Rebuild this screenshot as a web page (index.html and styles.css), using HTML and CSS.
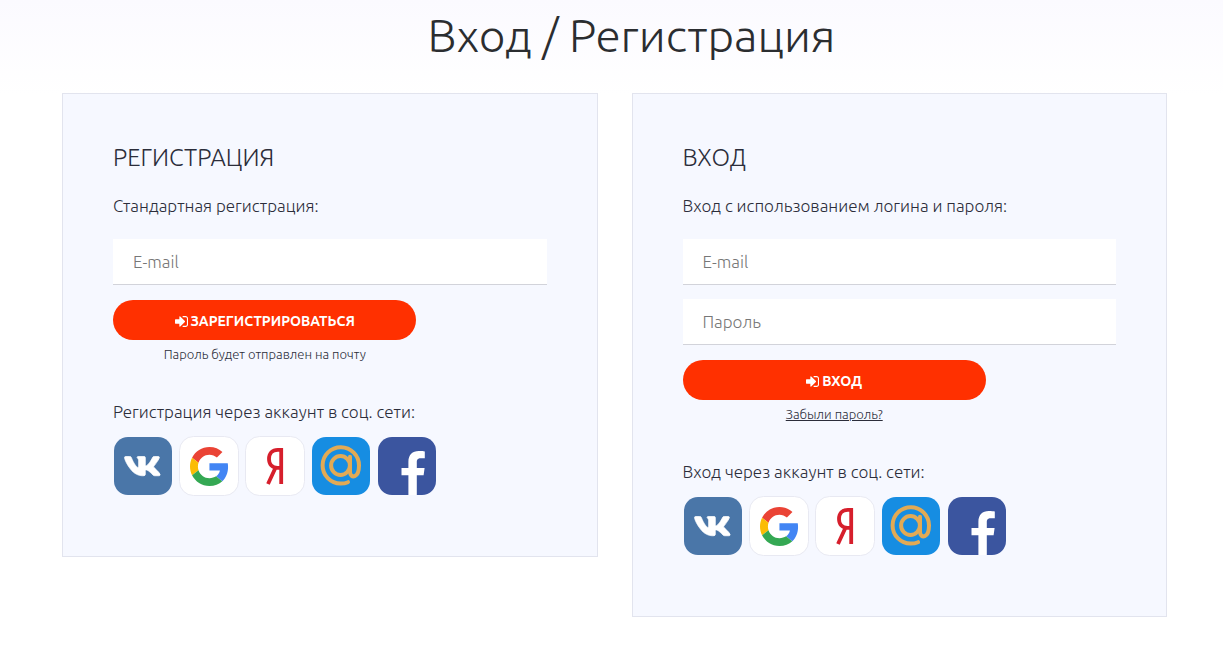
FILE: index.html
```html
<!DOCTYPE html>
<html lang="ru">
<head>
    <meta charset="UTF-8">
    <meta name="viewport" content="width=device-width, initial-scale=1.0">
    <title>Вход / Регистрация</title>
    <link rel="stylesheet" href="styles.css">
</head>
<body>
    <!-- Shared icons -->
    <svg class="sprite" aria-hidden="true">
        <symbol id="sign-in" viewBox="128 128 1536 1536">
            <path d="M1312 896q0 26-19 45l-544 544q-19 19-45 19t-45-19-19-45v-288h-448q-26 0-45-19t-19-45v-384q0-26 19-45t45-19h448v-288q0-26 19-45t45-19 45 19l544 544q19 19 19 45zm352-352v704q0 119-84.5 203.5t-203.5 84.5h-320q-13 0-22.5-9.5t-9.5-22.5q0-4-1-20t-.5-26.5 3-23.5 10-19.5 20.5-6.5h320q66 0 113-47t47-113v-704q0-66-47-113t-113-47h-312l-11.5-1-11.5-3-8-5.5-7-9-2-13.5q0-4-1-20t-.5-26.5 3-23.5 10-19.5 20.5-6.5h320q119 0 203.5 84.5t84.5 203.5z"/>
        </symbol>
        <symbol id="vk" viewBox="-1 -1 60 60">
            <rect width="58" height="58" rx="14" fill="#4a76a8"/>
            <path fill="#fff" stroke="#fff" stroke-width="12" transform="translate(9.3 13.8) scale(.066 .06)" d="M545 117.7c3.7-12.5 0-21.7-17.8-21.7h-58.9c-15 0-21.9 7.9-25.6 16.7 0 0-30 73.1-72.4 120.5-13.7 13.7-20 18.1-27.5 18.1-3.7 0-9.4-4.4-9.4-16.9V117.7c0-15-4.2-21.7-16.6-21.7h-92.6c-9.4 0-15 7-15 13.5 0 14.2 21.2 17.5 23.4 57.5v86.8c0 19-3.4 22.5-10.9 22.5-20 0-68.6-73.4-97.4-157.4-5.8-16.3-11.5-22.9-26.6-22.9H38.8c-16.8 0-20.2 7.9-20.2 16.7 0 15.6 20 93.1 93.1 195.5C160.4 378.1 229 416 291.4 416c37.5 0 42.1-8.4 42.1-22.9 0-66.8-3.4-73.1 15.4-73.1 8.7 0 23.7 4.4 58.7 38.1 40 40 46.6 57.9 69 57.9h58.9c16.8 0 25.3-8.4 20.4-25-11.2-34.9-86.9-106.7-90.3-111.5-8.7-11.2-6.2-16.2 0-26.2.1-.1 72-101.3 79.4-135.6z"/>
        </symbol>
        <symbol id="google" viewBox="-1 -1 60 60">
            <rect x="-.5" y="-.5" width="59" height="59" rx="14" fill="#fff" stroke="#e8e9f2"/>
            <g transform="translate(10 10) scale(.81)">
                <path fill="#ea4335" d="M24 9.5c3.54 0 6.71 1.22 9.21 3.6l6.85-6.85C35.9 2.38 30.47 0 24 0 14.62 0 6.51 5.38 2.56 13.22l7.98 6.19C12.43 13.72 17.74 9.5 24 9.5z"/>
                <path fill="#4285f4" d="M46.98 24.55c0-1.57-.15-3.09-.38-4.55H24v9.02h12.94c-.58 2.96-2.26 5.48-4.78 7.18l7.73 6c4.51-4.18 7.09-10.36 7.09-17.65z"/>
                <path fill="#fbbc05" d="M10.53 28.59c-.48-1.45-.76-2.99-.76-4.59s.27-3.14.76-4.59l-7.98-6.19C.92 16.46 0 20.12 0 24c0 3.88.92 7.54 2.56 10.78l7.97-6.19z"/>
                <path fill="#34a853" d="M24 48c6.48 0 11.93-2.13 15.89-5.81l-7.73-6c-2.15 1.45-4.92 2.3-8.16 2.3-6.26 0-11.57-4.22-13.47-9.91l-7.98 6.19C6.51 42.62 14.62 48 24 48z"/>
            </g>
        </symbol>
        <symbol id="yandex" viewBox="-1 -1 60 60">
            <rect x="-.5" y="-.5" width="59" height="59" rx="14" fill="#fff" stroke="#e8e9f2"/>
            <path fill="none" stroke="#d61f2c" stroke-width="3.8" d="M35.2 47V12.8h-3.4c-5.6 0-8.8 3.6-8.8 9.2 0 5.4 3.4 8.8 8.6 8.8h3.6M29.6 30.5 22 47"/>
        </symbol>
        <symbol id="mailru" viewBox="-1 -1 60 60">
            <rect width="58" height="58" rx="14" fill="#168de2"/>
            <g fill="none" stroke="#e2aa55" stroke-width="4" stroke-linecap="round">
                <circle cx="28.5" cy="28.5" r="9.4"/>
                <path d="M38 19.8v14.9c0 3.6 2.4 5.4 4.8 4.4 2.8-1.2 4.2-5.6 4.2-10.6a18.2 18.2 0 1 0-18.4 18.1c2.8 0 5.2-.4 7.4-1.4"/>
            </g>
        </symbol>
        <symbol id="facebook" viewBox="-1 -1 60 60">
            <rect width="58" height="58" rx="14" fill="#3b559f"/>
            <path fill="#fff" d="M30.4 58V38.3h-6.9V31h6.9v-6.2c0-7 4-10.8 10.4-10.8 2.6 0 4.8.2 6 .4v6.9h-4c-3.2 0-4 1.6-4 4V31h7.8l-1 7.3h-6.8V58z"/>
        </symbol>
    </svg>

    <div class="container">
        <h1>Вход / Регистрация</h1>
        <div class="columns">
            <section class="card">
                <h2>Регистрация</h2>
                <p>Стандартная регистрация:</p>
                <form onsubmit="return false">
                    <input type="email" name="email" placeholder="E-mail" aria-label="E-mail">
                    <div class="actions">
                        <button type="submit"><svg><use href="#sign-in"/></svg> Зарегистрироваться</button>
                        <span>Пароль будет отправлен на почту</span>
                    </div>
                </form>
                <p class="social-title">Регистрация через аккаунт в соц. сети:</p>
                <div class="social">
                    <a href="#" aria-label="ВКонтакте"><svg><use href="#vk"/></svg></a>
                    <a href="#" aria-label="Google"><svg><use href="#google"/></svg></a>
                    <a href="#" aria-label="Яндекс"><svg><use href="#yandex"/></svg></a>
                    <a href="#" aria-label="Mail.ru"><svg><use href="#mailru"/></svg></a>
                    <a href="#" aria-label="Facebook"><svg><use href="#facebook"/></svg></a>
                </div>
            </section>

            <section class="card">
                <h2>Вход</h2>
                <p>Вход с использованием логина и пароля:</p>
                <form onsubmit="return false">
                    <input type="email" name="login" placeholder="E-mail" aria-label="E-mail">
                    <input type="password" name="password" placeholder="Пароль" aria-label="Пароль">
                    <div class="actions">
                        <button type="submit"><svg><use href="#sign-in"/></svg> Вход</button>
                        <a href="#">Забыли пароль?</a>
                    </div>
                </form>
                <p class="social-title">Вход через аккаунт в соц. сети:</p>
                <div class="social">
                    <a href="#" aria-label="ВКонтакте"><svg><use href="#vk"/></svg></a>
                    <a href="#" aria-label="Google"><svg><use href="#google"/></svg></a>
                    <a href="#" aria-label="Яндекс"><svg><use href="#yandex"/></svg></a>
                    <a href="#" aria-label="Mail.ru"><svg><use href="#mailru"/></svg></a>
                    <a href="#" aria-label="Facebook"><svg><use href="#facebook"/></svg></a>
                </div>
            </section>
        </div>
    </div>
</body>
</html>
```
FILE: styles.css
```css
* {
    box-sizing: border-box;
}
body {
    margin: 0;
    font-family: Ubuntu, "Open Sans", sans-serif;
    font-size: 17px;
    font-weight: 300;
    line-height: 24px;
    color: #2b2d3a;
    background: #fff linear-gradient(#fbfaff, #fff 96px) no-repeat;
}
.sprite {
    display: none;
}
.container {
    padding: 8px 56px 40px 62px;
}
h1 {
    margin: 0 0 31px;
    padding-left: 34px;
    font-size: 46px;
    font-weight: 300;
    line-height: 54px;
    text-align: center;
    color: #2b2d30;
}
.columns {
    display: grid;
    grid-template-columns: 1fr 1fr;
    gap: 34px;
    align-items: start;
}
.card {
    padding: 50px 50px 60px;
    background: #f6f8ff;
    border: 1px solid #e2e4ee;
}
h2 {
    margin: 0 0 22px;
    font-size: 24px;
    font-weight: 300;
    line-height: 28px;
    text-transform: uppercase;
}
p {
    margin: 0 0 21px;
}
form input {
    display: block;
    width: 100%;
    height: 46px;
    margin-bottom: 14px;
    padding: 0 20px 1px;
    font: inherit;
    color: inherit;
    background: #fff;
    border: 0;
    border-bottom: 1px solid #d2d3da;
    border-radius: 0;
}
form input:last-of-type {
    margin-bottom: 15px;
}
form input::placeholder {
    color: #777;
    opacity: 1;
}
.actions {
    display: flex;
    flex-direction: column;
    align-items: center;
    gap: 4px;
    width: 70%;
    font-size: 13px;
    line-height: 20px;
}
.actions a {
    color: inherit;
}
button {
    display: flex;
    align-items: center;
    justify-content: center;
    gap: 3px;
    width: 100%;
    height: 40px;
    padding: 2px 0 0;
    font-family: inherit;
    font-size: 14px;
    font-weight: 600;
    text-transform: uppercase;
    color: #fff;
    background: #ff3000;
    border: 0;
    border-radius: 20px;
    cursor: pointer;
}
button:hover {
    background: #e62b00;
}
button svg {
    width: 13px;
    height: 13px;
    fill: currentColor;
}
.social-title {
    margin: 36px 0 12px;
}
.social {
    display: flex;
    flex-wrap: wrap;
    gap: 6px;
}
.social svg {
    display: block;
    width: 60px;
    height: 60px;
}
```
